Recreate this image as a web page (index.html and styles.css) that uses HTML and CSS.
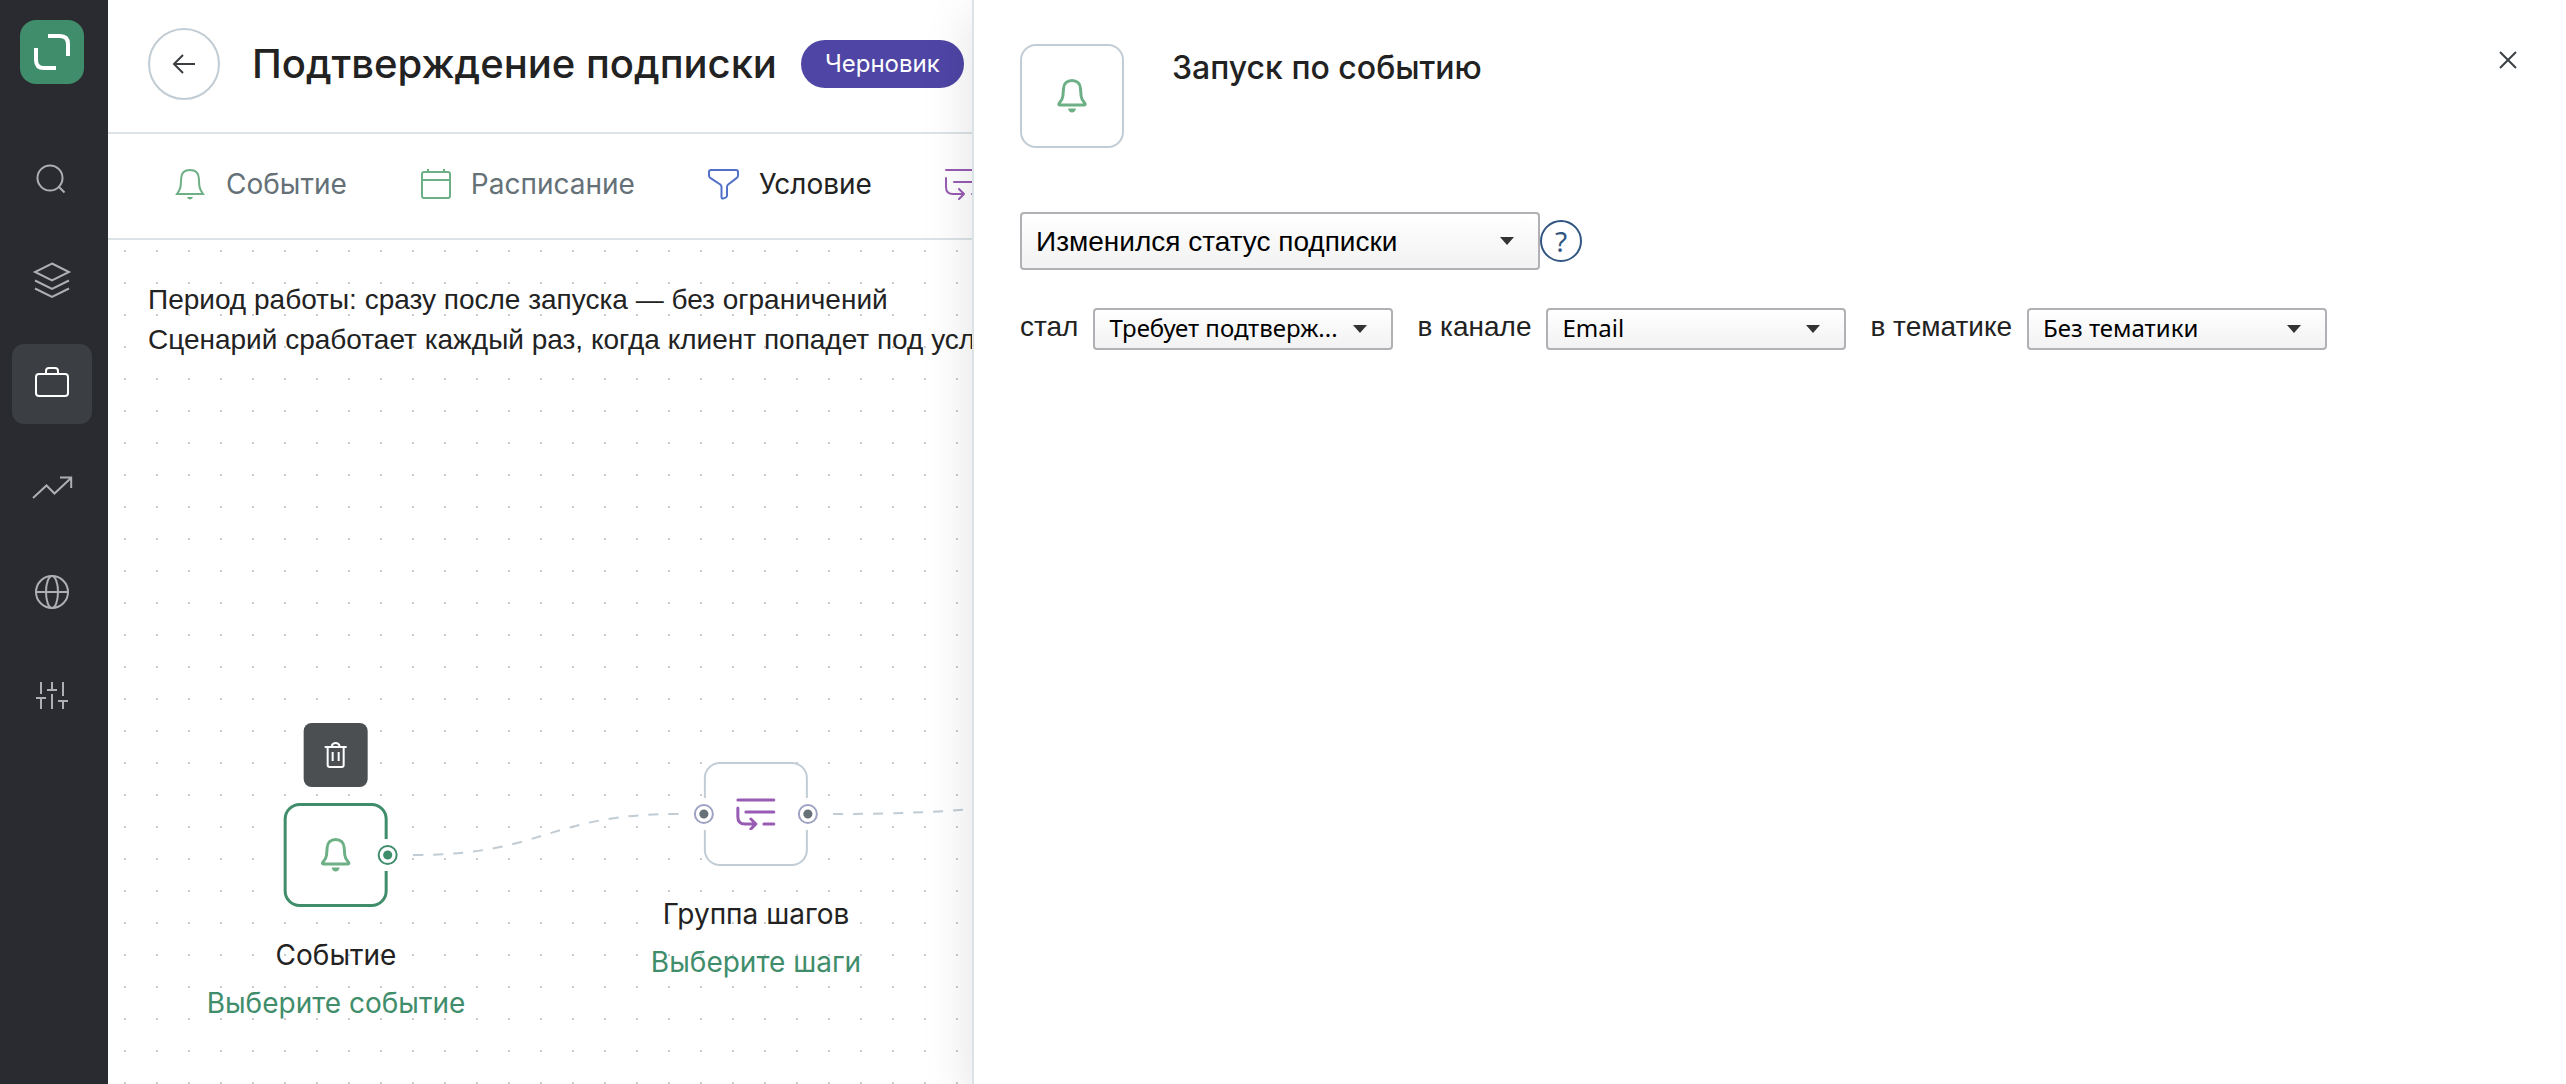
FILE: index.html
```html
<!DOCTYPE html>
<html lang="ru">
<head>
<meta charset="utf-8">
<meta name="viewport" content="width=device-width, initial-scale=1">
<title>Подтверждение подписки</title>
<link rel="stylesheet" href="styles.css">
</head>
<body>
<svg class="sprite" aria-hidden="true">
  <symbol id="bell" viewBox="0 0 32 36">
    <path d="M16 2.500c-5 0-8.200 3-8.500 8l-.6 7.500c-.2 2.500-1 4.300-3.700 7.300-.6.700-.7 1.700.6 1.700h24.400c1.300 0 1.200-1 .6-1.700-2.700-3-3.500-4.800-3.700-7.300l-.6-7.500c-.3-5-3.500-8-8.500-8z" fill="none" stroke="currentColor" stroke-width="3"/>
    <path d="M12 30.500h8c-.5 2.600-2 4-4 4s-3.500-1.400-4-4z" fill="currentColor" stroke="none"/>
  </symbol>
  <symbol id="steps" viewBox="0 0 40 32">
    <g fill="none" stroke="currentColor" stroke-linecap="round" stroke-linejoin="round">
      <path d="M2 2h36M10 14h28M28 26h10M2 10v9q0 7 7 7h11M15 21l5 5-5 5"/>
    </g>
  </symbol>
</svg>
<div class="app">
  <nav class="sidebar" aria-label="Главное меню">
    <a class="logo" href="#" aria-label="Главная">
      <svg width="64" height="64" viewBox="0 0 64 64" fill="none" stroke="#fff" stroke-width="4"><path d="M28 16h12q8 0 8 8v12M16 28v12q0 8 8 8h12"/></svg>
    </a>
    <a class="side-link" href="#" aria-label="Поиск">
      <svg viewBox="0 0 40 40"><circle cx="18" cy="22" r="12.500"/><path d="M26.500 30.500l6 6"/></svg>
    </a>
    <a class="side-link" href="#" aria-label="Слои">
      <svg viewBox="0 0 40 40"><path d="M20 3.500l17 8.500-17 8.500L3 12zM3 20.500l17 8.500 17-8.500M3 28.500l17 8.500 17-8.500"/></svg>
    </a>
    <a class="side-link side-link-active" href="#" aria-label="Кампании">
      <svg viewBox="0 0 40 40"><rect x="4" y="10" width="32" height="22" rx="3"/><path d="M14 10V7q0-3 3-3h6q3 0 3 3v3"/></svg>
    </a>
    <a class="side-link" href="#" aria-label="Отчёты">
      <svg viewBox="0 0 40 40"><path d="M1 30l13.500-12.500 8 8L39 10M28 9.500h11.200V20"/></svg>
    </a>
    <a class="side-link" href="#" aria-label="Сайты">
      <svg viewBox="0 0 40 40"><circle cx="20" cy="20" r="16"/><ellipse cx="20" cy="20" rx="6" ry="16"/><path d="M4 20h32"/></svg>
    </a>
    <a class="side-link" href="#" aria-label="Настройки">
      <svg viewBox="0 0 40 40"><path d="M9 6v12M4 22h10M9 22v11M20 6v7M15 14h10M20 18v15M31 6v14M26 25h10M31 25v8"/></svg>
    </a>
  </nav>

  <main class="main">
    <header class="header">
      <button class="back" type="button" aria-label="Назад">
        <svg width="24" height="24" viewBox="0 0 24 24"><path d="M23 12H2M11 3L2 12l9 9"/></svg>
      </button>
      <h1 class="title">Подтверждение подписки</h1>
      <span class="badge">Черновик</span>
    </header>
    <div class="toolbar">
      <button class="tool tool-muted" type="button">
        <svg class="tool-icon bell" viewBox="0 0 32 32"><path d="M16 2c-5.500 0-8.500 3-8.800 8l-.5 7.500c-.2 3-1.200 5-3.700 8.500h26c-2.500-3.500-3.500-5.500-3.700-8.500L24.800 10c-.3-5-3.300-8-8.800-8z"/><path class="clapper" d="M13 29h6c-.6 1.700-1.600 2.400-3 2.400s-2.400-.7-3-2.400z"/></svg>
        Событие
      </button>
      <button class="tool tool-muted" type="button">
        <svg class="tool-icon calendar" viewBox="0 0 32 32"><rect x="3" y="4" width="28" height="26" rx="2"/><path d="M3 12h28M9 1v3M25 1v3"/></svg>
        Расписание
      </button>
      <button class="tool" type="button">
        <svg class="tool-icon funnel" viewBox="0 0 32 32"><path d="M4 2h25q2 0 2 2v3.500q0 1.500-1.200 2.400l-8.600 6.600q-1.200 1-1.200 2.500v8.500q0 1.500-1.400 2.100l-2 .8q-2.100.6-2.100-1.400V19q0-1.500-1.200-2.500L3.200 9.900Q2 9 2 7.500V4q0-2 2-2z"/></svg>
        Условие
      </button>
      <button class="tool" type="button" aria-label="Группа шагов">
        <svg class="tool-icon steps" viewBox="0 0 40 32"><use href="#steps"/></svg>
      </button>
    </div>
    <div class="canvas">
      <p class="summary">Период работы: сразу после запуска — без ограничений<br>Сценарий сработает каждый раз, когда клиент попадет под усл</p>
      <svg class="edges" aria-hidden="true"><path d="M305 615C438 615 438 574 571 574"/><path d="M725 574C885 574 885 561 1045 561"/></svg>

      <div class="node node-event">
        <button class="trash" type="button" aria-label="Удалить">
          <svg width="24" height="28" viewBox="0 0 24 28"><path d="M1 6h22M4 6v18q0 2 2 2h12q2 0 2-2V6M9 11v9M15 11v9M8 5q1-3 4-3t4 3"/></svg>
        </button>
        <div class="box box-selected">
          <svg class="box-icon bell"><use href="#bell"/></svg>
          <span class="port port-right"></span>
        </div>
        <span class="node-name">Событие</span>
        <a class="node-link" href="#">Выберите событие</a>
      </div>

      <div class="node node-steps">
        <div class="box">
          <svg class="box-icon steps" viewBox="0 0 40 32"><use href="#steps"/></svg>
          <span class="port port-left"></span>
          <span class="port port-right"></span>
        </div>
        <span class="node-name">Группа шагов</span>
        <a class="node-link" href="#">Выберите шаги</a>
      </div>
    </div>
  </main>

  <aside class="panel">
    <header class="panel-head">
      <div class="box">
        <svg class="box-icon bell"><use href="#bell"/></svg>
      </div>
      <h2 class="panel-title">Запуск по событию</h2>
      <button class="close" type="button" aria-label="Закрыть">
        <svg width="20" height="20" viewBox="0 0 20 20"><path d="M2 2l16 16M18 2L2 18"/></svg>
      </button>
    </header>
    <div class="trigger">
      <span class="select select-large"><select aria-label="Событие"><option>Изменился статус подписки</option></select></span>
      <button class="help" type="button" aria-label="Справка">?</button>
    </div>
    <div class="params">
      <div class="param"><label for="status">стал</label><span class="select"><select id="status"><option>Требует подтверж...</option></select></span></div>
      <div class="param"><label for="channel">в канале</label><span class="select"><select id="channel"><option>Email</option></select></span></div>
      <div class="param"><label for="topic">в тематике</label><span class="select"><select id="topic"><option>Без тематики</option></select></span></div>
    </div>
  </aside>
</div>
</body>
</html>
```
FILE: styles.css
```css
*, *::before, *::after { box-sizing: border-box; }

body {
  margin: 0;
  color: #222;
  background: #fff;
  font-family: Inter, "Liberation Sans", sans-serif;
  font-size: 28px;
}

button { margin: 0; padding: 0; border: 0; background: none; font: inherit; color: inherit; cursor: pointer; }
a { text-decoration: none; }
svg { display: block; overflow: visible; }
.sprite { position: absolute; width: 0; height: 0; }

.app { position: relative; display: flex; min-height: 100vh; overflow: hidden; }

/* Sidebar */
.sidebar {
  flex: none;
  width: 108px;
  padding: 20px 4px 20px 0;
  background: #2a2b30;
  display: flex;
  flex-direction: column;
  align-items: center;
  gap: 24px;
}
.logo { width: 64px; height: 64px; margin-bottom: 28px; border-radius: 16px; background: #408d6b; }
.side-link {
  width: 80px;
  height: 80px;
  border-radius: 12px;
  display: grid;
  place-items: center;
  color: #aeafb2;
}
.side-link svg { width: 40px; height: 40px; fill: none; stroke: currentColor; stroke-width: 2; }
.side-link-active { background: #3b3e43; color: #fff; }

/* Main column */
.main { flex: 1; min-width: 0; display: flex; flex-direction: column; }
.header {
  height: 134px;
  padding: 28px 40px 32px;
  border-bottom: 2px solid #dce3e6;
  display: flex;
  align-items: center;
}
.back {
  width: 72px;
  height: 72px;
  margin-right: 32px;
  border: 2px solid #c1ccd4;
  border-radius: 50%;
  display: grid;
  place-items: center;
}
.back svg, .close svg { fill: none; stroke: #3b3e43; stroke-width: 2; }
.title { margin: 0 24px 0 0; font-size: 40px; font-weight: 500; line-height: 48px; }
.badge {
  height: 48px;
  padding: 0 24px;
  border-radius: 24px;
  background: #4e45a5;
  color: #fff;
  font-size: 24px;
  line-height: 48px;
}

.toolbar {
  height: 106px;
  padding: 0 66px 4px;
  border-bottom: 2px solid #dce3e6;
  display: flex;
  align-items: center;
  gap: 72px;
}
.tool { display: flex; align-items: center; gap: 20px; white-space: nowrap; }
.tool-muted { color: #657177; }
.tool-icon { width: 32px; height: 32px; fill: none; stroke: currentColor; stroke-width: 2; }
.tool-icon.steps { width: 40px; }
.bell, .calendar { color: #6db085; }
.funnel { color: #5270c7; }
.steps { color: #985cb4; }
.clapper { fill: currentColor; stroke: none; }

/* Canvas */
.canvas {
  position: relative;
  flex: 1;
  min-height: 840px;
  padding: 40px;
  background: radial-gradient(circle at 1px 1px, #c8cacc 1px, transparent 1px) 16px 10px / 32px 32px;
}
.summary { margin: 0; font-family: "Liberation Sans", Arial, sans-serif; line-height: 40px; white-space: nowrap; }
.edges { position: absolute; inset: 0; width: 100%; height: 100%; fill: none; stroke: #c1ccd4; stroke-width: 2; stroke-dasharray: 10 10; }

.node {
  position: absolute;
  transform: translateX(-50%);
  display: flex;
  flex-direction: column;
  align-items: center;
  line-height: 48px;
  white-space: nowrap;
}
.node-event { left: 228px; top: 483px; }
.node-steps { left: 648px; top: 522px; }
.trash {
  width: 64px;
  height: 64px;
  margin-bottom: 16px;
  border-radius: 8px;
  background: #4b4f52;
  display: grid;
  place-items: center;
}
.trash svg { fill: none; stroke: #fff; stroke-width: 2; }
.box {
  position: relative;
  flex: none;
  width: 104px;
  height: 104px;
  border: 2px solid #c1ccd4;
  border-radius: 16px;
  background: #fff;
  display: grid;
  place-items: center;
}
.box-selected { border: 3px solid #408d6b; }
.box-icon { width: 32px; height: 36px; stroke-width: 3; }
.box-icon.steps { width: 40px; height: 32px; }
.node-name { margin-top: 24px; }
.node-link { color: #408d6b; }

/* Connection port: a white break in the box border, with a ring and a dot over it */
.port {
  --ring: #9ea3c4;
  --dot: #657177;
  position: absolute;
  top: 50%;
  width: 20px;
  height: 32px;
  background: #fff;
  transform: translateY(-50%);
  display: grid;
  align-items: center;
}
.port::after {
  content: "";
  height: 20px;
  border: 2px solid var(--ring);
  border-radius: 50%;
  background: radial-gradient(circle, var(--dot) 4px, #fff 5px);
}
.port-left { left: -12px; }
.port-right { right: -12px; }
.box-selected .port { --ring: #408d6b; --dot: #408d6b; right: -13px; }

/* Settings panel over the canvas */
.panel {
  position: absolute;
  z-index: 2;
  top: 0;
  right: 0;
  bottom: 0;
  width: calc(100% - 972px);
  padding: 44px 46px;
  border-left: 2px solid #dce3e6;
  background: #fff;
  box-shadow: 0 16px 48px rgba(0, 0, 0, .12);
}
.panel-head { display: flex; align-items: flex-start; margin-bottom: 64px; }
.panel-title { flex: 1; margin: 4px 0 0 48px; font-size: 32px; font-weight: 500; line-height: 40px; }
.close { width: 24px; height: 32px; display: grid; place-items: center; }

.trigger { display: flex; align-items: center; margin-bottom: 38px; }
.params { display: flex; flex-wrap: wrap; gap: 24px; }
.param { display: flex; align-items: center; gap: 15px; font-family: "Liberation Sans", Arial, sans-serif; }
.param label { padding-bottom: 4px; }

.select { position: relative; width: 300px; }
.select::after {
  content: "";
  position: absolute;
  right: 26px;
  top: 50%;
  margin-top: -4px;
  border: 7px solid transparent;
  border-top: 8px solid #333;
  border-bottom: 0;
  pointer-events: none;
}
.select select {
  display: block;
  width: 100%;
  height: 42px;
  padding: 0 48px 4px 14px;
  appearance: none;
  border: 2px solid #b0b0b5;
  border-radius: 4px;
  background: linear-gradient(#fff, #f2f2f2);
  color: #000;
  font: 24px "Noto Sans", "Open Sans", sans-serif;
}
.select-large { width: 520px; }
.select-large select { height: 58px; padding-bottom: 0; font: 28px "Liberation Sans", Arial, sans-serif; }
.help {
  width: 42px;
  height: 42px;
  border: 2px solid #2f5580;
  border-radius: 50%;
  color: #2f5580;
  font: 28px/36px "Noto Sans", sans-serif;
}
```
